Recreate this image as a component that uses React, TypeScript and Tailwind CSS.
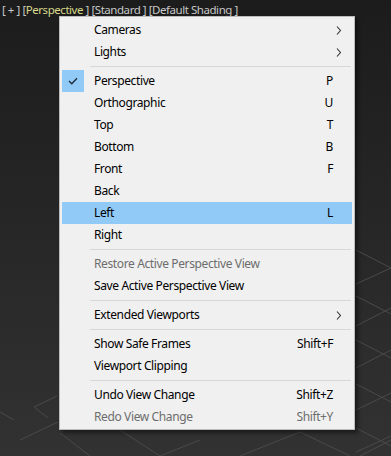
import React from "react";

type Item =
  | { kind: "sep" }
  | {
      kind: "item";
      label: string;
      shortcut?: string;
      sub?: boolean;
      checked?: boolean;
      disabled?: boolean;
      active?: boolean;
    };

const items: Item[] = [
  { kind: "item", label: "Cameras", sub: true },
  { kind: "item", label: "Lights", sub: true },
  { kind: "sep" },
  { kind: "item", label: "Perspective", shortcut: "P", checked: true },
  { kind: "item", label: "Orthographic", shortcut: "U" },
  { kind: "item", label: "Top", shortcut: "T" },
  { kind: "item", label: "Bottom", shortcut: "B" },
  { kind: "item", label: "Front", shortcut: "F" },
  { kind: "item", label: "Back" },
  { kind: "item", label: "Left", shortcut: "L", active: true },
  { kind: "item", label: "Right" },
  { kind: "sep" },
  { kind: "item", label: "Restore Active Perspective View", disabled: true },
  { kind: "item", label: "Save Active Perspective View" },
  { kind: "sep" },
  { kind: "item", label: "Extended Viewports", sub: true },
  { kind: "sep" },
  { kind: "item", label: "Show Safe Frames", shortcut: "Shift+F" },
  { kind: "item", label: "Viewport Clipping" },
  { kind: "sep" },
  { kind: "item", label: "Undo View Change", shortcut: "Shift+Z" },
  { kind: "item", label: "Redo View Change", shortcut: "Shift+Y", disabled: true },
];

function Grid() {
  const lines: [number, number, number, number][] = [
    [356, 284, 391, 268],
    [356, 326, 391, 308],
    [356, 368, 391, 350],
    [356, 410, 391, 393],
    [356, 452, 391, 436],
    [356, 250, 391, 268],
    [356, 296, 391, 314],
    [356, 340, 391, 358],
    [356, 384, 391, 402],
    [356, 428, 391, 446],
    [300, 432, 240, 456],
    [300, 432, 350, 456],
    [200, 440, 160, 456],
    [120, 430, 160, 456],
    [58, 422, 20, 440],
    [60, 433, 90, 456],
    [34, 407, 57, 396],
    [34, 407, 48, 418],
    [0, 412, 14, 420],
    [360, 456, 391, 440],
  ];
  return (
    <svg className="absolute inset-0" width="391" height="456" viewBox="0 0 391 456">
      {lines.map((l, i) => (
        <line key={i} x1={l[0]} y1={l[1]} x2={l[2]} y2={l[3]} stroke="#4a4a4a" strokeWidth="1" />
      ))}
    </svg>
  );
}

function Chevron() {
  return (
    <svg width="6" height="9" viewBox="0 0 6 9" className="absolute right-[10px] top-[7px]">
      <path d="M1 0.5 L4.5 4.5 L1 8.5" fill="none" stroke="#333333" strokeWidth="1.1" />
    </svg>
  );
}

function Check() {
  return (
    <div className="w-[22px] h-[22px] bg-[#91c9f7] flex items-center justify-center">
      <svg width="10" height="8" viewBox="0 0 10 8">
        <path d="M1 4 L3.8 6.8 L9 1.2" fill="none" stroke="#1e2a38" strokeWidth="1.3" />
      </svg>
    </div>
  );
}

export default function App() {
  return (
    <div
      className="relative w-[391px] h-[456px] overflow-hidden bg-gradient-to-b from-[#1c1c1c] to-[#323232]"
      style={{ fontFamily: '"Noto Sans", "Open Sans", sans-serif' }}
    >
      <Grid />
      <div className="relative pl-[2px] pt-[1px] text-[11.5px] leading-[18px] tracking-[-0.45px] text-[#c8c8c8] whitespace-pre">
        <span>[ + ] [</span>
        <span className="text-[#d8d88a]">Perspective</span>
        <span> ] [Standard ] [Default Shading ]</span>
      </div>
      <div className="absolute left-[59px] top-[16px] w-[296px] h-[414px] bg-[#f0f0f0] border border-[#bcbcbc] shadow-[3px_3px_4px_rgba(0,0,0,0.45)] pt-[2px] px-[2px] text-[12px] tracking-[-0.38px] text-black">
        {items.map((it, i) =>
          it.kind === "sep" ? (
            <div key={i} className="h-[7px] flex items-center pl-[28px] pr-[1px]">
              <div className="h-px w-full bg-[#d7d7d7]" />
            </div>
          ) : (
            <div
              key={i}
              className={
                "relative h-[22px] flex items-center " +
                (it.active ? "bg-[#91c9f7] " : "") +
                (it.disabled ? "text-[#6d6d6d]" : "text-black")
              }
            >
              <div className="w-[22px] h-[22px] shrink-0">{it.checked ? <Check /> : null}</div>
              <div className="ml-[10px] flex-1 whitespace-nowrap">{it.label}</div>
              {it.shortcut ? <div className="mr-[19px] whitespace-nowrap">{it.shortcut}</div> : null}
              {it.sub ? <Chevron /> : null}
            </div>
          )
        )}
      </div>
    </div>
  );
}
